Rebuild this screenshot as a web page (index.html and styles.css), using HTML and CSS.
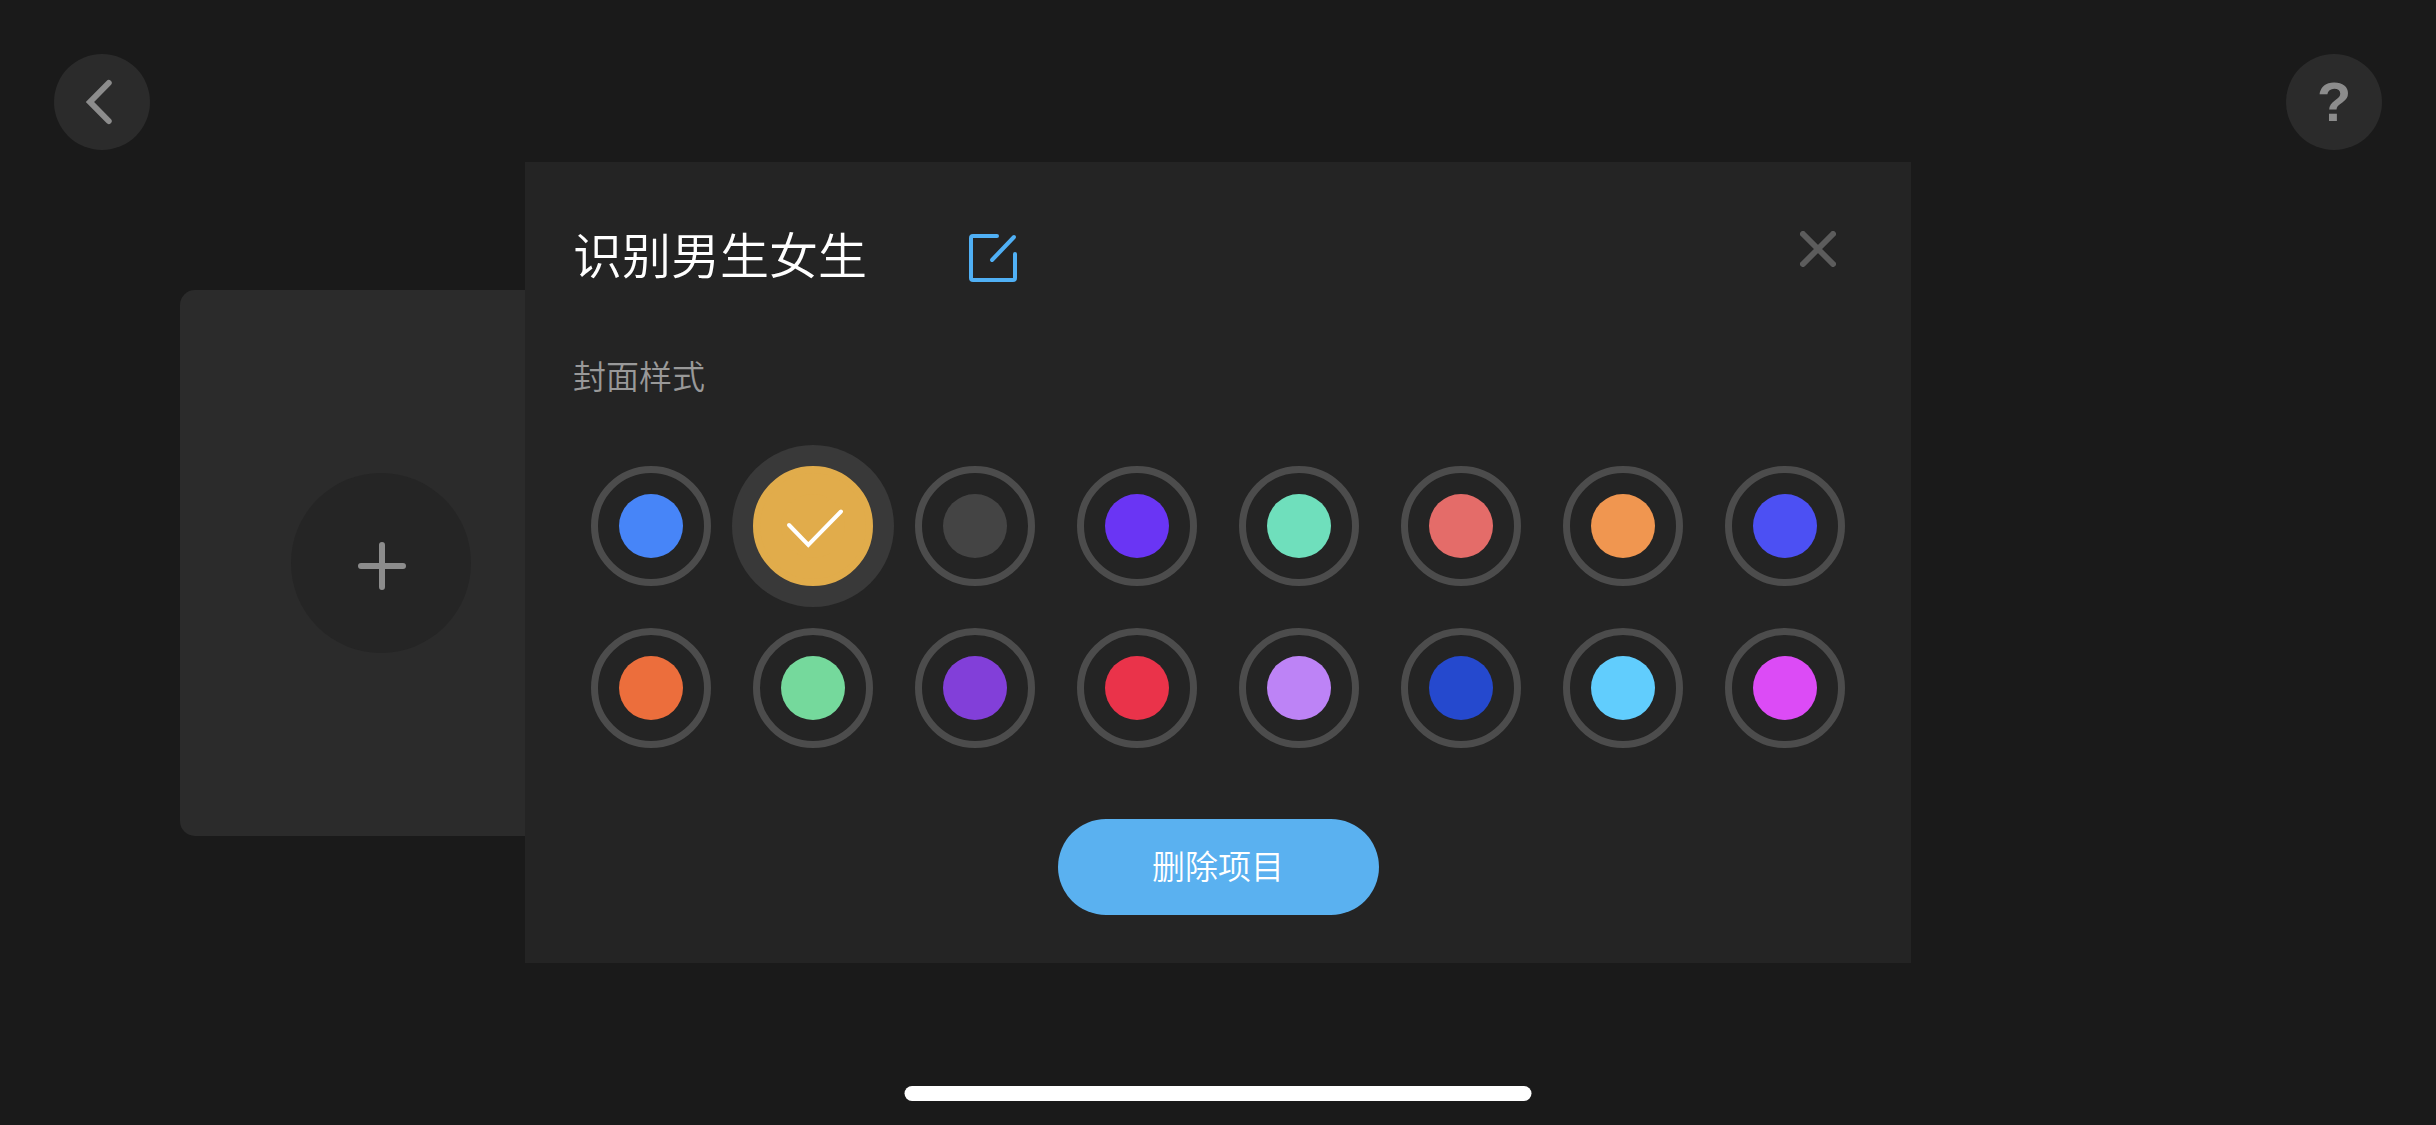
FILE: index.html
```
<!DOCTYPE html>
<html lang="zh-CN">

<head>
    <meta charset="UTF-8">
    <meta name="viewport" content="width=device-width, initial-scale=1.0">
    <title>识别男生女生</title>
    <link rel="stylesheet" href="styles.css">
</head>

<body>
    <header class="topbar">
        <button type="button" class="round-btn" aria-label="返回">
            <svg viewBox="0 0 96 96">
                <path d="M54.7 29L36 48L54.7 67" />
            </svg>
        </button>
        <button type="button" class="round-btn" aria-label="帮助">?</button>
    </header>

    <main class="projects">
        <button type="button" class="add-card" aria-label="新建项目">
            <span class="add-circle">
                <svg viewBox="0 0 48 48">
                    <path d="M4 24H46M25 3V45" />
                </svg>
            </span>
        </button>
    </main>

    <div class="overlay">
        <section class="modal" role="dialog" aria-labelledby="projectTitle">
            <div class="modal-header">
                <h1 id="projectTitle">识别男生女生</h1>
                <button type="button" class="edit-btn" aria-label="编辑">
                    <svg viewBox="0 0 48 48">
                        <path d="M28 2H4Q2 2 2 4V44Q2 46 4 46H44Q46 46 46 44V20M45 3L23 26" />
                    </svg>
                </button>
                <button type="button" class="close-btn" aria-label="关闭">
                    <svg viewBox="0 0 36 36">
                        <path d="M3 3L33 33M33 3L3 33" />
                    </svg>
                </button>
            </div>

            <h2 id="coverLabel">封面样式</h2>
            <div class="swatches" role="radiogroup" aria-labelledby="coverLabel">
                <label class="swatch blue"><input type="radio" name="cover" aria-label="蓝色"></label>
                <label class="swatch gold">
                    <input type="radio" name="cover" aria-label="金色" checked>
                    <svg class="check" viewBox="0 0 120 120">
                        <path d="M36 59L55.3 79L88 45.5" />
                    </svg>
                </label>
                <label class="swatch gray"><input type="radio" name="cover" aria-label="灰色"></label>
                <label class="swatch violet"><input type="radio" name="cover" aria-label="紫罗兰"></label>
                <label class="swatch mint"><input type="radio" name="cover" aria-label="薄荷绿"></label>
                <label class="swatch coral"><input type="radio" name="cover" aria-label="珊瑚红"></label>
                <label class="swatch orange"><input type="radio" name="cover" aria-label="橙色"></label>
                <label class="swatch indigo"><input type="radio" name="cover" aria-label="靛蓝"></label>
                <label class="swatch rust"><input type="radio" name="cover" aria-label="橘红"></label>
                <label class="swatch green"><input type="radio" name="cover" aria-label="绿色"></label>
                <label class="swatch purple"><input type="radio" name="cover" aria-label="紫色"></label>
                <label class="swatch red"><input type="radio" name="cover" aria-label="红色"></label>
                <label class="swatch lilac"><input type="radio" name="cover" aria-label="淡紫"></label>
                <label class="swatch navy"><input type="radio" name="cover" aria-label="深蓝"></label>
                <label class="swatch sky"><input type="radio" name="cover" aria-label="天蓝"></label>
                <label class="swatch pink"><input type="radio" name="cover" aria-label="洋红"></label>
            </div>

            <button type="button" class="delete-btn">删除项目</button>
        </section>
    </div>

    <div class="home-bar"></div>
</body>

</html>
```

FILE: styles.css
```
* {
    box-sizing: border-box;
}

body {
    font-family: "Noto Sans CJK SC", sans-serif;
    background-color: #1a1a1a;
    color: white;
    margin: 0;
    min-height: 100vh;
}

button {
    border: none;
    padding: 0;
    font-family: inherit;
    background: none;
    cursor: pointer;
}

svg {
    display: block;
    width: 100%;
    fill: none;
    stroke: currentColor;
    stroke-linecap: round;
}

.topbar {
    display: flex;
    justify-content: space-between;
    padding: 54px;
}

.round-btn {
    width: 96px;
    height: 96px;
    border-radius: 50%;
    background-color: #2b2b2b;
    color: #8c8c8c;
    font-family: "Liberation Sans", sans-serif;
    font-size: 56px;
    font-weight: bold;
    line-height: 96px;
}

.round-btn svg {
    stroke-width: 6;
}

.projects {
    padding: 86px 180px;
}

.add-card {
    display: flex;
    align-items: center;
    justify-content: center;
    width: 402px;
    height: 546px;
    border-radius: 15px;
    background-color: #2b2b2b;
}

.add-circle {
    display: flex;
    align-items: center;
    justify-content: center;
    width: 180px;
    height: 180px;
    padding-top: 6px;
    border-radius: 50%;
    background-color: #252525;
    color: #8c8c8c;
}

.add-circle svg {
    width: 48px;
    overflow: visible;
    stroke-width: 6;
}

/* dialog */
.overlay {
    position: fixed;
    inset: 0;
    display: flex;
    align-items: center;
    justify-content: center;
}

.modal {
    display: flex;
    flex-direction: column;
    padding: 69px 45px 48px;
    background-color: #242424;
}

.modal-header {
    display: flex;
    align-items: flex-end;
    height: 51px;
}

h1 {
    margin: 0;
    padding: 0 102px 4px 3px;
    font-size: 49px;
    font-weight: 350;
    line-height: 51px;
}

.edit-btn {
    width: 48px;
    height: 48px;
    color: #50b0f5;
}

.edit-btn svg {
    stroke-width: 4;
}

.close-btn {
    align-self: flex-start;
    width: 36px;
    height: 36px;
    margin: 0 30px 0 auto;
    color: #5c5c5c;
}

.close-btn svg {
    stroke-width: 6;
}

h2 {
    margin: 69px 0 46px;
    padding-left: 3px;
    color: #999;
    font-size: 33px;
    font-weight: 350;
    line-height: 48px;
}

.swatches {
    display: grid;
    grid-template-columns: repeat(8, 162px);
}

.swatch {
    position: relative;
    display: flex;
    align-items: center;
    justify-content: center;
    height: 162px;
    border-radius: 50%;
    cursor: pointer;
}

.swatch input {
    appearance: none;
    display: flex;
    align-items: center;
    justify-content: center;
    width: 120px;
    height: 120px;
    margin: 0;
    border: 7px solid #4c4c4c;
    border-radius: 50%;
}

.swatch input::before {
    content: "";
    width: 64px;
    height: 64px;
    border-radius: 50%;
    background-color: var(--color);
}

.swatch:has(input:checked) {
    background-color: #393939;
}

.swatch input:checked {
    border-color: var(--color);
    background-color: var(--color);
}

.check {
    position: absolute;
    width: 120px;
    stroke-width: 4;
    pointer-events: none;
}

.blue { --color: #4785f8; }
.gold { --color: #e1ac4b; }
.gray { --color: #444444; }
.violet { --color: #6a35f4; }
.mint { --color: #6fdfbc; }
.coral { --color: #e46c69; }
.orange { --color: #f09650; }
.indigo { --color: #4c50f3; }
.rust { --color: #ec6e3c; }
.green { --color: #75d99c; }
.purple { --color: #823fd9; }
.red { --color: #ea334a; }
.lilac { --color: #bd83f6; }
.navy { --color: #2549ce; }
.sky { --color: #61cdfd; }
.pink { --color: #dc4bf6; }

.delete-btn {
    align-self: center;
    width: 321px;
    height: 96px;
    margin-top: 50px;
    padding-bottom: 4px;
    border-radius: 48px;
    background-color: #5ab1f0;
    color: white;
    font-size: 33px;
    font-weight: 350;
}

.home-bar {
    position: fixed;
    bottom: 24px;
    left: 50%;
    width: 627px;
    height: 15px;
    border-radius: 8px;
    background-color: white;
    transform: translateX(-50%);
}
```
